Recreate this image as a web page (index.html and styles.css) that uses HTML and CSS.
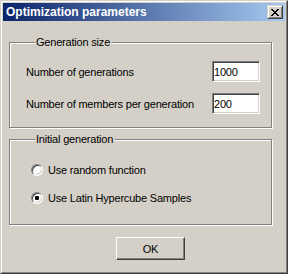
FILE: index.html
```html
<!DOCTYPE html>
<html lang="en">
  <head>
    <meta name="viewport" content="width=device-width, initial-scale=1.0" />
    <title>Optimization parameters</title>
    <link rel="stylesheet" href="styles.css">
  </head>
  <body>
    <div class="window">
      <div class="frame">
        <div class="titlebar">
          <span class="title">Optimization parameters</span>
          <span class="close">
            <svg width="8" height="7" viewBox="0 0 8 7" shape-rendering="crispEdges">
              <path fill="#000" d="M0 0h2v1H0z M6 0h2v1H6z M1 1h2v1H1z M5 1h2v1H5z M2 2h4v1H2z M3 3h2v1H3z M2 4h4v1H2z M1 5h2v1H1z M5 5h2v1H5z M0 6h2v1H0z M6 6h2v1H6z"/>
            </svg>
          </span>
        </div>
        <div class="client">
          <fieldset class="group group-size">
            <legend>Generation size</legend>
            <div class="row">
              <label>Number of generations</label>
              <input class="edit" type="text" value="1000">
            </div>
            <div class="row">
              <label>Number of members per generation</label>
              <input class="edit" type="text" value="200">
            </div>
          </fieldset>
          <fieldset class="group group-init">
            <legend>Initial generation</legend>
            <div class="radio-row"><span class="radio"></span>Use random function</div>
            <div class="radio-row"><span class="radio checked"></span>Use Latin Hypercube Samples</div>
          </fieldset>
          <div class="buttons">
            <button class="btn">OK</button>
          </div>
        </div>
      </div>
    </div>
  </body>
</html>
```

FILE: styles.css
```css
* {
  margin: 0;
  padding: 0;
  box-sizing: border-box;
}
body {
  font-family: "Liberation Sans", Arial, sans-serif;
  font-size: 11px;
  letter-spacing: -0.2px;
  color: #000;
  background: #d4d0c8;
}
.window {
  width: 288px;
  height: 274px;
  border: 1px solid;
  border-color: #d4d0c8 #404040 #404040 #d4d0c8;
  background: #d4d0c8;
}
.frame {
  height: 100%;
  border: 1px solid;
  border-color: #fff #808080 #808080 #fff;
  padding: 1px;
  display: flex;
  flex-direction: column;
}
.titlebar {
  height: 18px;
  flex: none;
  display: flex;
  align-items: center;
  justify-content: space-between;
  padding: 0 2px 0 3px;
  background: linear-gradient(to right, #0a246a, #a6caf0);
}
.title {
  color: #fff;
  font-weight: bold;
  font-size: 12px;
  letter-spacing: 0;
}
.close {
  width: 16px;
  height: 14px;
  border: 1px solid;
  border-color: #d4d0c8 #404040 #404040 #d4d0c8;
  box-shadow: inset 1px 1px #fff, inset -1px -1px #808080;
  background: #d4d0c8;
  display: flex;
  align-items: center;
  justify-content: center;
}
.close svg {
  display: block;
}
.client {
  flex: 1;
  padding-top: 15px;
}
.group {
  width: 263px;
  margin-left: 6px;
  border: 1px solid #808080;
  box-shadow: inset 1px 1px #fff, 1px 1px #fff;
  min-inline-size: 0;
}
.group legend {
  margin-left: 9px;
  padding: 0 2px 0 1px;
  line-height: 13px;
  background: #d4d0c8;
}
.group-size {
  padding: 12px 11px 13px 16px;
}
.group-init {
  margin-top: 5px;
  padding: 17px 11px 20px 16px;
}
.row {
  height: 21px;
  display: flex;
  align-items: center;
  justify-content: space-between;
}
.row + .row {
  margin-top: 11px;
}
.edit {
  width: 48px;
  height: 21px;
  border: 1px solid;
  border-color: #808080 #fff #fff #808080;
  box-shadow: inset 1px 1px #404040, inset -1px -1px #d4d0c8;
  background: #fff;
  padding-left: 1px;
  font: inherit;
  letter-spacing: inherit;
  color: #000;
  outline: none;
}
.radio-row {
  height: 13px;
  display: flex;
  align-items: center;
  padding-left: 5px;
}
.radio-row + .radio-row {
  margin-top: 15px;
}
.radio {
  width: 12px;
  height: 12px;
  margin-right: 5px;
  border-radius: 50%;
  border: 1px solid;
  border-color: #808080 #fff #fff #808080;
  box-shadow: inset 1px 1px #404040, inset -1px -1px #d4d0c8;
  background: #fff;
  display: flex;
  align-items: center;
  justify-content: center;
}
.radio.checked::after {
  content: "";
  width: 4px;
  height: 4px;
  border-radius: 1px;
  background: #000;
}
.buttons {
  padding: 12px 0 0 113px;
}
.btn {
  display: block;
  width: 69px;
  height: 23px;
  border: 1px solid;
  border-color: #fff #404040 #404040 #fff;
  box-shadow: inset -1px -1px #808080;
  background: #d4d0c8;
  font: inherit;
  letter-spacing: inherit;
  color: #000;
}
```
